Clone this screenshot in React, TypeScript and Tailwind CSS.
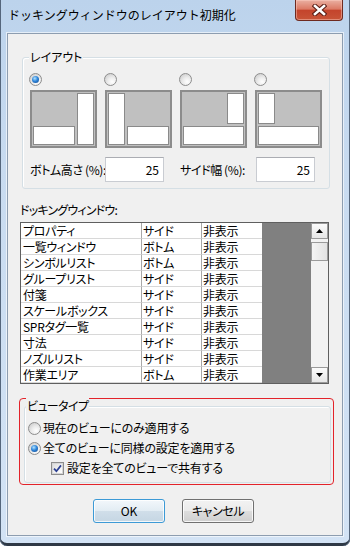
import React from "react";

const JP = "font-['Noto_Sans_CJK_JP','Noto_Sans',sans-serif] [font-feature-settings:'palt']";

function Radio({ checked = false }: { checked?: boolean }) {
  return (
    <span className="flex h-[13px] w-[13px] shrink-0 items-center justify-center rounded-full border border-[#8d8d8d] bg-[radial-gradient(circle_at_65%_70%,#ffffff_0%,#ececec_40%,#c4c4c4_100%)]">
      {checked && (
        <span className="h-[7px] w-[7px] rounded-full bg-[radial-gradient(circle_at_40%_35%,#b4e4ff_0%,#2f86da_45%,#0b3f86_100%)]" />
      )}
    </span>
  );
}

function Checkbox() {
  return (
    <span className="flex h-[13px] w-[13px] shrink-0 items-center justify-center border border-[#8d8d8d] bg-white">
      <span className="flex h-[11px] w-[11px] items-center justify-center border border-[#d6d6d6] bg-[linear-gradient(135deg,#dedede,#ffffff)]">
        <svg width="9" height="9" viewBox="0 0 9 9">
          <path d="M1 4.6 L3.4 7.2 L8 1.4" stroke="#2b3f92" strokeWidth="1.7" fill="none" />
        </svg>
      </span>
    </span>
  );
}

const WH = "bg-white border border-[#8a8a8a]";

function Thumb({ v }: { v: 1 | 2 | 3 | 4 }) {
  if (v === 1)
    return (
      <div className="grid h-[58px] w-[67px] grid-cols-[1fr_17px] grid-rows-[1fr_19px] gap-[2px] border-2 border-[#8c8c8c] bg-[#c0c0c0] p-[1px]">
        <div />
        <div className={`${WH} row-span-2`} />
        <div className={WH} />
      </div>
    );
  if (v === 2)
    return (
      <div className="grid h-[58px] w-[67px] grid-cols-[17px_1fr] grid-rows-[1fr_19px] gap-[2px] border-2 border-[#8c8c8c] bg-[#c0c0c0] p-[1px]">
        <div className={`${WH} row-span-2`} />
        <div />
        <div className={WH} />
      </div>
    );
  if (v === 3)
    return (
      <div className="grid h-[58px] w-[67px] grid-cols-[1fr_17px] grid-rows-[1fr_19px] gap-[2px] border-2 border-[#8c8c8c] bg-[#c0c0c0] p-[1px]">
        <div />
        <div className={WH} />
        <div className={`${WH} col-span-2`} />
      </div>
    );
  return (
    <div className="grid h-[58px] w-[67px] grid-cols-[17px_1fr] grid-rows-[1fr_19px] gap-[2px] border-2 border-[#8c8c8c] bg-[#c0c0c0] p-[1px]">
      <div className={WH} />
      <div />
      <div className={`${WH} col-span-2`} />
    </div>
  );
}

const rows: [string, string][] = [
  ["プロパティ", "サイド"],
  ["一覧ウィンドウ", "ボトム"],
  ["シンボルリスト", "ボトム"],
  ["グループリスト", "サイド"],
  ["付箋", "サイド"],
  ["スケールボックス", "サイド"],
  ["SPRタグ一覧", "サイド"],
  ["寸法", "サイド"],
  ["ノズルリスト", "サイド"],
  ["作業エリア", "ボトム"],
];

function Arrow({ up }: { up?: boolean }) {
  return (
    <div className="flex h-[16px] w-[17px] items-center justify-center border border-[#9a9a9a] bg-[linear-gradient(180deg,#fbfbfb,#e6e6e6)]">
      <svg width="7" height="4" viewBox="0 0 7 4">
        {up ? <path d="M0 4 L3.5 0 L7 4 Z" fill="#000" /> : <path d="M0 0 L3.5 4 L7 0 Z" fill="#000" />}
      </svg>
    </div>
  );
}

export default function App() {
  return (
    <div
      className={`relative flex h-[546px] w-[350px] flex-col overflow-hidden rounded-b-[7px] bg-[linear-gradient(180deg,#bcd3ec_0%,#c8dbf0_30%,#d3e3f5_100%)] text-black shadow-[inset_1px_0_0_#55667c,inset_-1px_0_0_#55667c,inset_0_-3px_0_#2f3946] ${JP}`}
    >
      {/* title bar */}
      <div className="flex h-[33px] shrink-0 items-start">
        <div className="pl-[8px] pt-[6px] text-[12px] leading-[18px] [font-feature-settings:normal]">
          ドッキングウィンドウのレイアウト初期化
        </div>
        <div className="ml-auto mr-[7px] flex h-[21px] w-[48px] items-center justify-center rounded-b-[4px] border border-t-0 border-[#6e2a20] bg-[linear-gradient(180deg,#eab0a2_0%,#dc7a65_45%,#c4442c_52%,#c85437_100%)] shadow-[inset_0_0_0_1px_rgba(255,210,200,0.45)]">
          <svg width="15" height="12" viewBox="0 0 15 12">
            <path d="M3 2 L12 10 M12 2 L3 10" stroke="#5a1d14" strokeWidth="4.6" strokeLinecap="square" />
            <path d="M3 2 L12 10 M12 2 L3 10" stroke="#ffffff" strokeWidth="2.6" strokeLinecap="square" />
          </svg>
        </div>
      </div>

      {/* panel */}
      <div className="ml-[7px] flex h-[503px] w-[336px] flex-col border border-[#8d9db0] bg-[#f0f0f0] text-[12px] shadow-[0_0_0_1px_rgba(255,255,255,0.6)]">
        {/* layout group */}
        <div className="relative ml-[14px] mr-[12px] mt-[23px] h-[132px] rounded-[3px] border border-[#d5dfe5] pt-[15px] pl-[7px] shadow-[inset_1px_1px_0_#fff]">
          <span className="absolute left-[6px] top-[-10px] bg-[#f0f0f0] px-[1px] leading-[18px]">レイアウト</span>
          <div className="flex gap-[8px]">
            {([1, 2, 3, 4] as const).map((v) => (
              <div key={v} className="flex flex-col">
                <div className="ml-[-1px]">
                  <Radio checked={v === 1} />
                </div>
                <div className="mt-[4px]">
                  <Thumb v={v} />
                </div>
              </div>
            ))}
          </div>
          <div className="mt-[9px] flex items-center">
            <span className="w-[75px] whitespace-nowrap tracking-[-0.4px]">ボトム高さ (%):</span>
            <div className="flex h-[25px] w-[59px] items-center justify-end border border-[#c9ccd2] border-t-[#abadb3] bg-white pr-[4px]">25</div>
            <span className="ml-[16px] w-[76px] whitespace-nowrap tracking-[-0.4px]">サイド幅 (%):</span>
            <div className="flex h-[25px] w-[59px] items-center justify-end border border-[#c9ccd2] border-t-[#abadb3] bg-white pr-[4px]">25</div>
          </div>
        </div>

        {/* docking windows label */}
        <div className="ml-[12px] mt-[13px] h-[16px] leading-[16px] tracking-[-0.8px]">ドッキングウィンドウ:</div>

        {/* list */}
        <div className="ml-[12px] mr-[13px] mt-[4px] flex h-[162px] border border-[#5f5f5f]">
          <div className="flex w-[241px] flex-col bg-white">
            {rows.map(([a, b]) => (
              <div key={a} className="grid h-[16px] grid-cols-[121px_60px_60px] leading-[15px] tracking-[-0.3px]">
                <span className="truncate border-b border-r border-b-[#d8d8d8] border-r-[#a8a8a8] pl-[2px]">{a}</span>
                <span className="border-b border-r border-b-[#d8d8d8] border-r-[#a8a8a8] pl-[1px]">{b}</span>
                <span className="border-b border-b-[#d8d8d8] pl-[1px]">非表示</span>
              </div>
            ))}
          </div>
          <div className="flex-1 bg-[#808080]" />
          <div className="flex w-[17px] flex-col bg-[#f2f2f2]">
            <Arrow up />
            <div className="mt-[3px] h-[19px] w-[17px] border border-[#9a9a9a] bg-[linear-gradient(90deg,#f4f4f4,#e2e2e2)]" />
            <div className="flex-1" />
            <Arrow />
          </div>
        </div>

        {/* view type (annotated) */}
        <div className="ml-[11px] mr-[8px] mt-[14px] rounded-[4px] border border-[#e3232a] pb-[1px] pl-[4px] pr-[2px] pt-[7px]">
          <div className="relative h-[77px] rounded-[3px] border border-[#d5dfe5] pl-[3px] pt-[11px] shadow-[inset_1px_1px_0_#fff]">
            <span className="absolute left-[1px] top-[-10px] bg-[#f0f0f0] px-[1px] leading-[18px] tracking-[-0.6px]">ビュータイプ</span>
            <div className="flex h-[20px] items-center gap-[2px]">
              <Radio />
              <span className="tracking-[-0.2px]">現在のビューにのみ適用する</span>
            </div>
            <div className="flex h-[20px] items-center gap-[2px]">
              <Radio checked />
              <span className="tracking-[-0.2px]">全てのビューに同様の設定を適用する</span>
            </div>
            <div className="ml-[23px] flex h-[20px] items-center gap-[3px]">
              <Checkbox />
              <span className="tracking-[-0.2px]">設定を全てのビューで共有する</span>
            </div>
          </div>
        </div>

        {/* buttons */}
        <div className="mt-[14px] flex justify-center gap-[17px] pr-[3px]">
          <button className="h-[24px] w-[72px] rounded-[3px] border border-[#3c9ad6] bg-[linear-gradient(180deg,#f2f7fb_0%,#e2ecf3_50%,#d0dee9_52%,#c5d6e3_100%)] leading-[22px] shadow-[inset_0_0_0_1px_rgba(255,255,255,0.8)]">
            OK
          </button>
          <button className="h-[24px] w-[72px] rounded-[3px] border border-[#707070] bg-[linear-gradient(180deg,#f2f2f2_0%,#ebebeb_50%,#dddddd_52%,#cfcfcf_100%)] leading-[22px] tracking-[-0.4px] shadow-[inset_0_0_0_1px_rgba(255,255,255,0.8)]">
            キャンセル
          </button>
        </div>
      </div>
    </div>
  );
}
